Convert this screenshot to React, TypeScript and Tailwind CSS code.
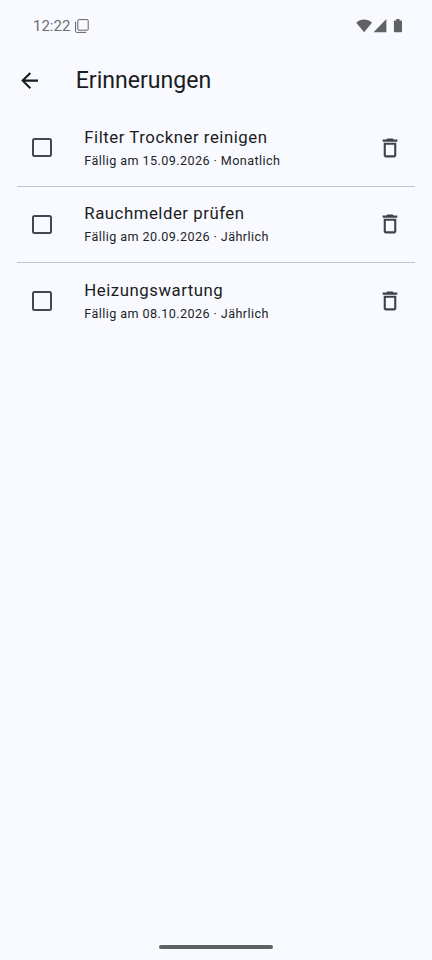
import React from "react";

const reminders = [
  { title: "Filter Trockner reinigen", due: "Fällig am 15.09.2026 · Monatlich" },
  { title: "Rauchmelder prüfen", due: "Fällig am 20.09.2026 · Jährlich" },
  { title: "Heizungswartung", due: "Fällig am 08.10.2026 · Jährlich" },
];

function StatusBar() {
  return (
    <div className="flex h-[51px] items-center justify-between pl-[33px] pr-[29px] text-[#606164]">
      <div className="flex items-center gap-[5px]">
        <span className="pt-[2px] text-[15px] leading-none text-[#6c6d70]">12:22</span>
        <svg className="h-[14px] w-[14px]" viewBox="0 0 14 14" fill="none" stroke="currentColor" strokeWidth="1">
          <rect x="2.8" y="0.6" width="10.4" height="10.6" rx="0.9" />
          <path d="M0.6 2.6v9.8a1 1 0 0 0 1 1h9.6" />
        </svg>
      </div>
      <svg className="h-[14px] w-[47px]" viewBox="0 0 47 14" fill="currentColor">
        <path d="M0.2 3.7C4.8 -0.5 11.4 -0.5 16 3.7L8.1 13.2Z" />
        <path d="M30.4 0.1V13.2H17.6Z" />
        <path d="M40.3 0.1h3.2v1.3h1.6q0.9 0 0.9 0.9v10q0 0.9-0.9 0.9h-6.3q-0.9 0-0.9-0.9v-10q0-0.9 0.9-0.9h1.5z" />
      </svg>
    </div>
  );
}

function Reminder({ title, due }: { title: string; due: string }) {
  return (
    <li className="mx-[17px] flex h-[76.65px] items-center border-b border-[#c4c6cc] pl-[15px] pr-3 last:border-transparent">
      <button aria-label={title} className="h-[19.5px] w-[19.5px] shrink-0 rounded-[2.5px] border-2 border-[#44474e]" />
      <div className="ml-[32.8px] grow">
        <div className="text-[16.8px] leading-[25px] tracking-[0.525px] text-[#191c20]">{title}</div>
        <div className="text-[12.6px] leading-[21px] tracking-[0.42px] text-[#22252a]">{due}</div>
      </div>
      <button aria-label="Löschen">
        <svg className="h-[26px] w-[26px]" viewBox="-0.4 -0.4 24.8 24.8" fill="#3e4148">
          <path d="M6 19c0 1.1.9 2 2 2h8c1.1 0 2-.9 2-2V7H6v12zM8 9h8v10H8V9zm7.5-5l-1-1h-5l-1 1H5v2h14V4h-3.5z" />
        </svg>
      </button>
    </li>
  );
}

export default function App() {
  return (
    <div className="flex h-[960px] w-[432px] flex-col bg-[#f9faff] font-[Roboto,sans-serif]">
      <StatusBar />
      <header className="flex h-[58.9px] items-center pl-[17px]">
        <svg className="h-[25.2px] w-[25.2px]" viewBox="0 0 24 24" fill="#191c20">
          <path d="M20 11H7.83l5.59-5.59L12 4l-8 8 8 8 1.41-1.41L7.83 13H20v-2z" />
        </svg>
        <h1 className="ml-[33.5px] text-[23.1px] leading-[29px] text-[#191c20]">Erinnerungen</h1>
      </header>
      <ul className="grow">
        {reminders.map((r) => (
          <Reminder key={r.title} {...r} />
        ))}
      </ul>
      <div className="mb-[10.6px] h-[4px] w-[114px] self-center rounded-full bg-[#606164]" />
    </div>
  );
}
